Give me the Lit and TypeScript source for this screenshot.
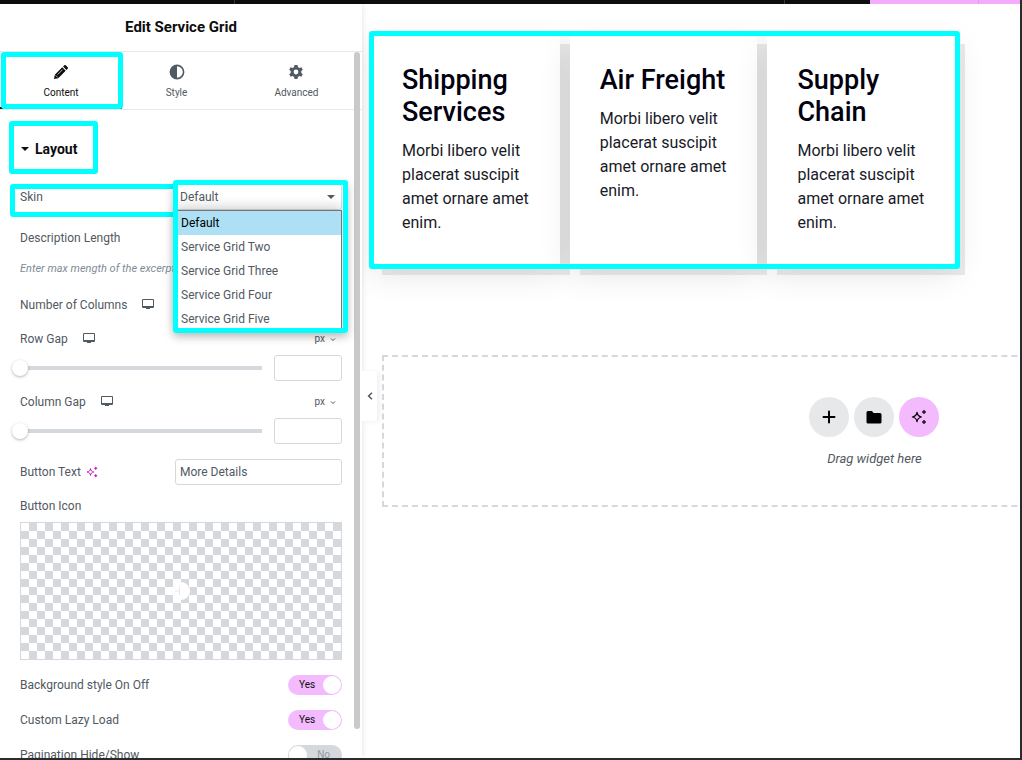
import { LitElement, html, css, svg } from "lit";
import { customElement, state } from "lit/decorators.js";

const sparkle = svg`
  <path d="M6 3.4 C6.5 6.4 7.5 7.4 10.4 8 C7.5 8.6 6.5 9.6 6 12.6 C5.5 9.6 4.5 8.6 1.4 8 C4.5 7.4 5.5 6.4 6 3.4 Z" fill="none" stroke="currentColor" stroke-width="1.2" stroke-linejoin="round"/>
  <path d="M13 1 L13.6 2.4 L15 3 L13.6 3.6 L13 5 L12.4 3.6 L11 3 L12.4 2.4 Z M13 11 L13.6 12.4 L15 13 L13.6 13.6 L13 15 L12.4 13.6 L11 13 L12.4 12.4 Z" fill="currentColor" stroke="currentColor" stroke-width="0.6" stroke-linejoin="round"/>`;

const icon = (size: number, body: unknown, box = 16) =>
  html`<svg width=${size} height=${size} viewBox="0 0 ${box} ${box}" aria-hidden="true">${body}</svg>`;

const pencil = svg`<path fill="currentColor" d="M1 15 L1.8 10.8 L9.3 3.3 L12.7 6.7 L5.2 14.2 Z M10.1 2.5 L11.3 1.3 Q12 0.7 12.8 1.3 L14.7 3.2 Q15.3 4 14.7 4.7 L13.5 5.9 Z"/><path d="M2.6 11.3 L4.7 13.4 M4.6 10.6 L9.6 5.6" stroke="#fff" stroke-width="0.7" fill="none"/>`;
const contrast = svg`<circle cx="8" cy="8" r="6.6" fill="none" stroke="currentColor" stroke-width="1.6"/><path fill="currentColor" d="M8 1.5 A6.5 6.5 0 0 0 8 14.5 Z"/>`;
const gear = svg`<path fill="currentColor" fill-rule="evenodd" d="M6.5 1 H9.5 L9.9 3 L11.4 3.9 L13.3 3.2 L14.8 5.8 L13.3 7.1 V8.9 L14.8 10.2 L13.3 12.8 L11.4 12.1 L9.9 13 L9.5 15 H6.5 L6.1 13 L4.6 12.1 L2.7 12.8 L1.2 10.2 L2.7 8.9 V7.1 L1.2 5.8 L2.7 3.2 L4.6 3.9 L6.1 3 Z M8 5.6 A2.4 2.4 0 1 0 8 10.4 A2.4 2.4 0 1 0 8 5.6 Z"/>`;
const desktop = svg`<path fill="currentColor" fill-rule="evenodd" d="M1 0 H11 Q12 0 12 1 V8 Q12 9 11 9 H1 Q0 9 0 8 V1 Q0 0 1 0 Z M1 1 V7 H11 V1 Z M4 9 H8 V10 H4 Z"/>`;
const chevronDown = svg`<path d="M1 2.5 L3 4.5 L5 2.5" fill="none" stroke="currentColor" stroke-width="1"/>`;
const caret = svg`<path d="M0 2 H8 L4 6 Z" fill="currentColor"/>`;

@customElement("app-root")
export class AppRoot extends LitElement {
  @state() private skin = "Default";

  private tabs = [
    { label: "Content", icon: pencil },
    { label: "Style", icon: contrast },
    { label: "Advanced", icon: gear },
  ];
  private skins = ["Default", "Service Grid Two", "Service Grid Three", "Service Grid Four", "Service Grid Five"];
  private services = ["Shipping Services", "Air Freight", "Supply Chain"];
  private switches = [
    { id: "bg", label: "Background style On Off", on: true },
    { id: "lazy", label: "Custom Lazy Load", on: true },
    { id: "pages", label: "Pagination Hide/Show", on: false },
  ];

  static styles = css`
    :host {
      display: block;
      height: 100vh;
      font-family: Roboto, sans-serif;
      font-size: 12px;
      line-height: 16px;
      color: #515962;
    }
    * { box-sizing: border-box; }
    button, input, select { font: inherit; color: inherit; margin: 0; }
    button { border: 0; padding: 0; background: none; cursor: pointer; }
    svg { display: block; flex: none; }
    .window {
      display: flex;
      flex-direction: column;
      height: 100%;
      border: solid #2b2b2e;
      border-width: 0 2px 2px 0;
      overflow: hidden;
      background: #fff;
    }
    .topbar { display: flex; flex: none; height: 4px; background: #0c0d0e; }
    .topbar span { flex: 235; border-right: 1px solid #34363a; }
    .topbar .wide { flex: 551; }
    .topbar .rest { flex: 85; border: 0; }
    .topbar .pink { flex: 109; background: #f3acfb; border-color: #e399ec; }
    .topbar .pink-end { flex: 41; background: #f3acfb; border: 0; }
    .main { display: flex; flex: 1; min-height: 0; }

    .panel {
      position: relative;
      z-index: 1;
      flex: none;
      width: 362px;
      display: flex;
      flex-direction: column;
      background: #fff;
      box-shadow: 0 0 6px rgba(0, 0, 0, 0.12);
    }
    .panel-body { flex: 1; min-height: 0; overflow: hidden; }
    .title {
      margin: 0;
      padding: 13px 0 14px;
      border-bottom: 1px solid #e6e8ea;
      font-size: 15px;
      line-height: 20px;
      font-weight: 700;
      text-align: center;
      color: #0c0d0e;
    }
    .tabs { display: flex; border-bottom: 1px solid #e6e8ea; }
    .tab {
      position: relative;
      flex: 1 1 auto;
      display: flex;
      flex-direction: column;
      align-items: center;
      gap: 5px;
      padding: 12px 0 8px;
      font-size: 10px;
      line-height: 16px;
    }
    .tab.active { color: #0c0d0e; box-shadow: inset 0 -2px #0c0d0e; }
    .mark {
      position: absolute;
      z-index: 3;
      border: 5px solid #00ffff;
      border-radius: 3px;
      pointer-events: none;
    }
    .mark-tab { inset: 0 -1px 0 1px; }
    .mark-head { inset: -18px -15px -15px -11px; }
    .mark-skin { inset: 0 164px -7px -10px; }
    .mark-select { inset: -4px -6px -123px -2px; box-shadow: 0 4px 8px rgba(0, 0, 0, 0.25); }
    .mark-cards { inset: -3px -5px -4px -3px; }
    .scrollbar {
      position: absolute;
      top: 48px;
      right: 2px;
      bottom: 29px;
      width: 6px;
      border-radius: 3px;
      background: #c9c9c9;
    }

    .section { display: flex; flex-direction: column; padding: 29px 20px 0; }
    .section-head {
      position: relative;
      align-self: flex-start;
      display: flex;
      align-items: center;
      gap: 6px;
      padding-left: 1px;
      font-size: 14px;
      line-height: 20px;
      font-weight: 700;
      color: #0c0d0e;
    }
    .row {
      position: relative;
      display: flex;
      align-items: center;
      justify-content: space-between;
      min-height: 26px;
      margin-top: 15px;
    }
    .row.first { margin-top: 25px; }
    .row.short { min-height: 20px; }
    .row.head { min-height: 16px; margin-top: 13px; }
    .name { display: flex; align-items: center; gap: 15px; }
    .name.close { gap: 5px; color: inherit; }
    .ai { color: #c00bb9; }
    .helper {
      margin: 11px 0 0;
      padding-bottom: 1px;
      font-size: 11px;
      line-height: 14px;
      font-style: italic;
      color: #818a96;
      white-space: nowrap;
    }
    .field { position: relative; width: 167px; height: 26px; }
    .box {
      width: 100%;
      height: 26px;
      padding: 0 4px;
      border: 1px solid #d5d8dc;
      border-radius: 3px;
      background: #fff;
      outline: 0;
    }
    select.box { appearance: none; }
    .field .arrow { position: absolute; top: 9px; right: 7px; pointer-events: none; }
    .menu {
      position: absolute;
      z-index: 2;
      top: 26px;
      left: 0;
      right: 0;
      margin: 0;
      padding: 0;
      list-style: none;
      border: 1px solid #777;
      border-bottom: 0;
      background: #fff;
      box-shadow: 0 -4px 10px rgba(0, 0, 0, 0.16);
    }
    .menu li { padding: 4px 5px; cursor: default; }
    .menu li.on { background: #ade0f5; color: #000; }
    .unit { display: flex; align-items: center; gap: 5px; padding-right: 6px; font-size: 10px; line-height: 16px; }
    .slider { display: flex; align-items: center; gap: 12px; margin-top: 8px; }
    .slider .box { width: 68px; flex: none; }
    .range {
      appearance: none;
      flex: 1;
      min-width: 0;
      height: 16px;
      margin-left: -8px;
      border-radius: 2px;
      background: linear-gradient(#d5d8dc, #d5d8dc) right center / calc(100% - 8px) 4px no-repeat;
    }
    .range::-webkit-slider-thumb {
      appearance: none;
      width: 16px;
      height: 16px;
      border-radius: 50%;
      background: #fff;
      box-shadow: 0 1px 3px rgba(0, 0, 0, 0.3);
    }
    .media {
      display: grid;
      place-items: center;
      width: 100%;
      height: 138px;
      margin-top: 8px;
      border: 1px solid #d5d8dc;
      background: repeating-conic-gradient(#d5d8dc 0 25%, #fff 0 50%) 0 0 / 16px 16px;
    }
    .switch { position: relative; display: block; height: 20px; }
    .switch input {
      appearance: none;
      display: block;
      width: 54px;
      height: 20px;
      padding: 1px;
      border-radius: 10px;
      background: #d5d8dc;
    }
    .switch input::before {
      content: "";
      display: block;
      width: 18px;
      height: 18px;
      border-radius: 50%;
      background: #fff;
    }
    .switch input:checked { background: #f3bafd; }
    .switch input:checked::before { margin-left: auto; }
    .switch span { position: absolute; top: 2px; right: 12px; font-size: 10px; line-height: 16px; color: #9198a1; }
    .switch.on span { right: auto; left: 11px; color: #0c0d0e; }

    .canvas { position: relative; flex: 1; min-width: 0; overflow: hidden; padding: 30px 0 0 10px; }
    .cards {
      position: relative;
      display: grid;
      grid-template-columns: repeat(3, 1fr);
      gap: 10px;
      width: 90%;
      color: #181a28;
    }
    .card {
      padding: 30px;
      background: #fff;
      box-shadow: 10px 10px 0 rgba(0, 0, 0, 0.08), 0 10px 30px rgba(0, 0, 0, 0.1);
    }
    .card h2 { margin: 0 0 11px; font-size: 27px; line-height: 32px; font-weight: 500; color: #02010f; }
    .card p { margin: 0; font-size: 16px; line-height: 24px; }
    .drop {
      display: flex;
      flex-direction: column;
      align-items: center;
      gap: 14px;
      width: 152%;
      margin: 90px 0 0 10px;
      padding: 40px 0 38px;
      border: 2px dashed #d5d8dc;
      font-size: 13px;
      font-style: italic;
    }
    .drop p { margin: 0; }
    .actions { display: flex; gap: 5px; }
    .round {
      display: grid;
      place-items: center;
      width: 40px;
      height: 40px;
      border-radius: 50%;
      background: #e6e8ea;
      color: #000;
    }
    .round.pink { background: #f3bafd; }
    .collapse {
      position: absolute;
      top: 367px;
      left: 100%;
      display: grid;
      place-items: center;
      width: 15px;
      height: 50px;
      border-radius: 0 3px 3px 0;
      background: #fff;
      box-shadow: 3px 1px 5px rgba(0, 0, 0, 0.06);
    }
  `;

  private gap(label: string, id: string) {
    return html`
      <div class="row head">
        <label class="name" for=${id}>${label} ${this.desktop()}</label>
        <button class="unit">px ${icon(6, chevronDown, 6)}</button>
      </div>
      <div class="slider">
        <input class="range" type="range" min="0" max="100" value="0" aria-label="${label} slider" />
        <input class="box" id=${id} type="text" inputmode="numeric" />
      </div>
    `;
  }

  private desktop() {
    return icon(12, desktop, 12);
  }

  render() {
    return html`
      <div class="window">
        <div class="topbar">
          <span></span><span class="wide"></span><span class="rest"></span><span class="pink"></span><span class="pink-end"></span>
        </div>
        <div class="main">
          <aside class="panel">
            <h1 class="title">Edit Service Grid</h1>
            <div class="panel-body">
              <nav class="tabs">
                ${this.tabs.map(
                  (t, i) => html`<button class="tab ${i === 0 ? "active" : ""}">
                    ${icon(16, t.icon)}<span>${t.label}</span>${i === 0 ? html`<i class="mark mark-tab"></i>` : ""}
                  </button>`
                )}
              </nav>
              <div class="section">
                <button class="section-head">
                  ${icon(8, caret, 8)}Layout<i class="mark mark-head"></i>
                </button>
                <div class="row first">
                  <label for="skin">Skin</label>
                  <i class="mark mark-skin"></i>
                  <div class="field">
                    <select class="box" id="skin" .value=${this.skin}
                      @change=${(e: Event) => (this.skin = (e.target as HTMLSelectElement).value)}>
                      ${this.skins.map((s) => html`<option>${s}</option>`)}
                    </select>
                    <svg class="arrow" width="8" height="8" viewBox="0 0 8 8" aria-hidden="true">${caret}</svg>
                    <ul class="menu" role="listbox" aria-label="Skin">
                      ${this.skins.map(
                        (s) => html`<li role="option" class=${s === this.skin ? "on" : ""} @click=${() => (this.skin = s)}>${s}</li>`
                      )}
                    </ul>
                    <i class="mark mark-select"></i>
                  </div>
                </div>
                <div class="row">Description Length</div>
                <p class="helper">Enter max mength of the excerpt</p>
                <div class="row"><span class="name">Number of Columns ${this.desktop()}</span></div>
                ${this.gap("Row Gap", "row-gap")} ${this.gap("Column Gap", "column-gap")}
                <div class="row">
                  <label class="name close" for="button-text">Button Text <span class="ai">${icon(12, sparkle)}</span></label>
                  <div class="field"><input class="box" id="button-text" type="text" value="More Details" /></div>
                </div>
                <div class="row head">Button Icon</div>
                <button class="media" aria-label="Choose button icon">
                  <svg width="18" height="18" viewBox="0 0 18 18" aria-hidden="true">
                    <circle cx="9" cy="9" r="9" fill="#fff" />
                    <path d="M3 9 H7 M7.5 5 V13" stroke="#efe3e6" stroke-width="1" />
                  </svg>
                </button>
                ${this.switches.map(
                  (s) => html`<div class="row short">
                    <label for=${s.id}>${s.label}</label>
                    <label class="switch ${s.on ? "on" : ""}">
                      <input type="checkbox" id=${s.id} ?checked=${s.on} /><span>${s.on ? "Yes" : "No"}</span>
                    </label>
                  </div>`
                )}
              </div>
            </div>
            <div class="scrollbar"></div>
            <button class="collapse" aria-label="Hide panel">
              <svg width="6" height="8" viewBox="0 0 6 8"><path d="M5 0.8 L1.6 4 L5 7.2" fill="none" stroke="#515962" stroke-width="1.5" /></svg>
            </button>
          </aside>
          <main class="canvas">
            <div class="cards">
              ${this.services.map(
                (s) => html`<article class="card">
                  <h2>${s}</h2>
                  <p>Morbi libero velit placerat suscipit amet ornare amet enim.</p>
                </article>`
              )}
              <i class="mark mark-cards"></i>
            </div>
            <div class="drop">
              <div class="actions">
                <button class="round" aria-label="Add element">
                  ${icon(16, svg`<path d="M8 2.5 V13.5 M2.5 8 H13.5" stroke="currentColor" stroke-width="2" stroke-linecap="round" />`)}
                </button>
                <button class="round" aria-label="Add template">
                  ${icon(16, svg`<path d="M2 2 H5.5 Q6 2 6.4 2.5 L7.5 4 H14 Q15.5 4 15.5 5.5 V13 Q15.5 14.5 14 14.5 H2 Q0.5 14.5 0.5 13 V3.5 Q0.5 2 2 2 Z" fill="currentColor" />`)}
                </button>
                <button class="round pink" aria-label="Build with AI">${icon(16, sparkle)}</button>
              </div>
              <p>Drag widget here</p>
            </div>
          </main>
        </div>
      </div>
    `;
  }
}
